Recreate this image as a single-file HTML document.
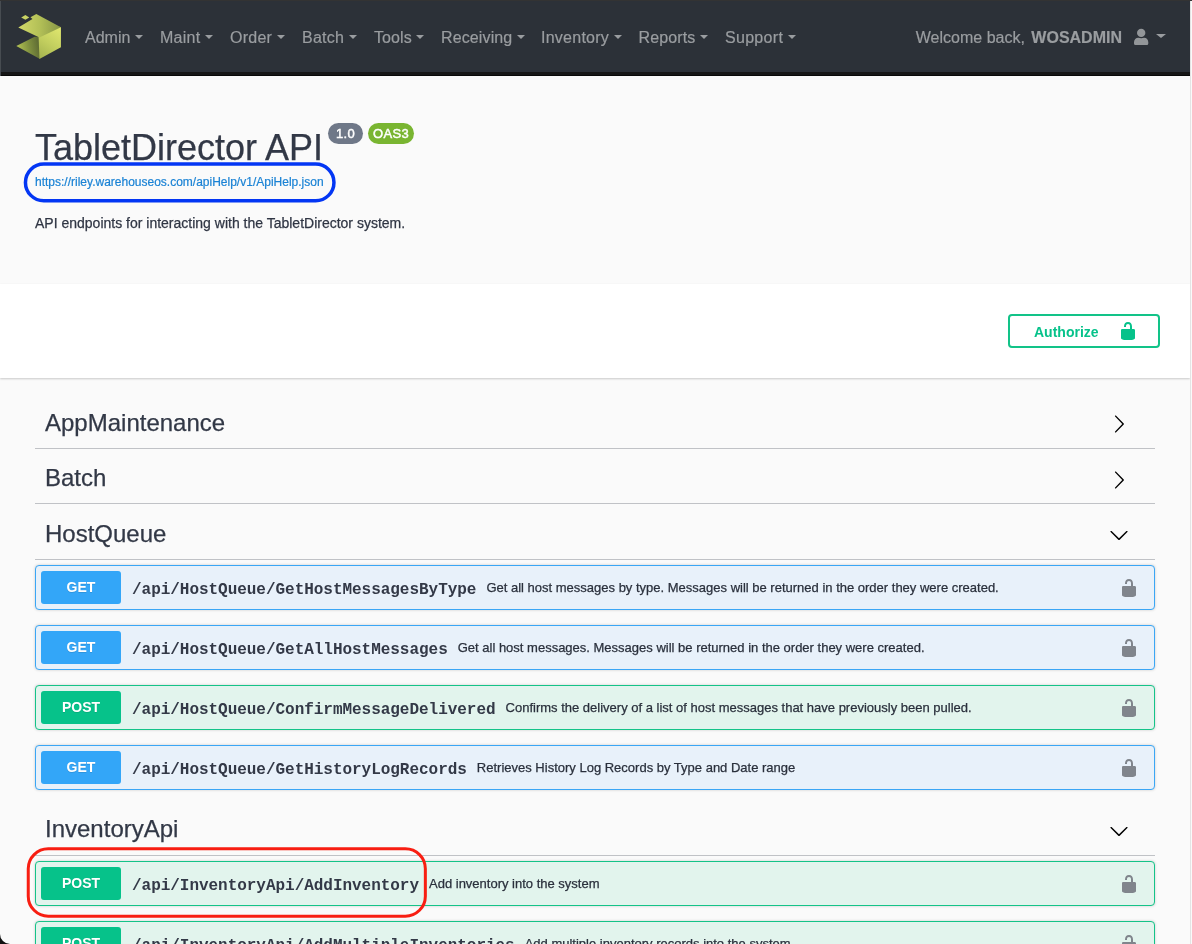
<!DOCTYPE html>
<html><head><meta charset="utf-8">
<style>
*{box-sizing:border-box;margin:0;padding:0}
html,body{width:1192px;height:944px;overflow:hidden;background:#fafafa;font-family:"Liberation Sans",sans-serif;color:#3b4151}
.title,.desc,.tag span{-webkit-text-stroke:0.25px currentColor}
.op .p i{-webkit-text-stroke:0.25px currentColor}
nav .item,.link{-webkit-text-stroke:0.2px currentColor}
.badge{-webkit-text-stroke:0.45px currentColor;letter-spacing:0.3px}
#edgeL{position:absolute;left:0;top:0;width:1px;height:76px;background:#474c51;z-index:5}
#edgeT{position:absolute;left:0;top:0;width:1192px;height:1px;background:#333;z-index:6}
#edgeR{position:absolute;left:1190px;top:0;width:2px;height:944px;background:#fafafa;z-index:5;border-left:1px solid #e4e4e4}
nav{position:absolute;left:0;top:0;width:1190px;height:72px;background:#2c3138}
nav .bb{position:absolute;left:0;top:72px;width:1190px;height:4px;background:#161616;border-bottom:1px solid #090909}
nav .logo{position:absolute}
nav .item{position:absolute;top:28px;font-size:16px;line-height:20px;color:#9a9da0;white-space:nowrap}
.caret{display:inline-block;width:0;height:0;border-left:4.7px solid transparent;border-right:4.7px solid transparent;border-top:4.7px solid #9a9da0;vertical-align:4.5px;margin-left:4.5px}
.info{position:absolute;left:0;top:76px;width:1190px;height:207px;background:#fafafa}
.title{position:absolute;left:35px;top:126px;font-size:36px;line-height:44px;color:#323846;white-space:nowrap}
.badge{position:absolute;top:123px;height:21px;border-radius:57px;color:#fff;font-size:13px;line-height:21px;text-align:center;font-weight:normal}
.link{position:absolute;left:35px;top:174px;font-size:12px;line-height:16px;color:#1b83d5;white-space:nowrap}
.desc{position:absolute;left:35px;top:214px;font-size:14px;line-height:18px;color:#303644;white-space:nowrap}
.scheme{position:absolute;left:0;top:284px;width:1190px;height:94px;background:#fff;box-shadow:0 1px 2px 0 rgba(0,0,0,.2)}
.auth{position:absolute;left:1008px;top:314px;width:152px;height:34px;border:2px solid #12c388;border-radius:4px;color:#06c28a;font-weight:bold;font-size:14px;line-height:32px;padding-left:24px;background:#fff}
.tag{position:absolute;left:35px;width:1120px;height:55px;border-bottom:1px solid rgba(59,65,81,.3);font-size:24px;color:#323846}
.tag span{position:absolute;left:10px;top:15px;line-height:28px;white-space:nowrap}
.tag svg{position:absolute;left:1074px;top:20px}
.op{position:absolute;left:35px;width:1120px;height:45px;border:1px solid #3aa6f5;background:#e8f1fa;border-radius:4px;box-shadow:0 0 3px rgba(0,0,0,.19)}
.op.post{border-color:#14c388;background:#e2f4ed}
.op .m{position:absolute;left:5px;top:5px;width:80px;height:33px;border-radius:3px;background:#33a6f8;color:#fff;font-weight:bold;font-size:14px;line-height:33px;text-align:center;text-shadow:0 1px 0 rgba(0,0,0,.1)}
.op.post .m{background:#06c28a}
.op .p{position:absolute;left:96px;top:11.5px;font-family:"Liberation Mono",monospace;font-weight:bold;font-size:16px;line-height:20px;color:#333947;white-space:nowrap;letter-spacing:-0.035px}
.op .p i{letter-spacing:0;font-style:normal;font-family:"Liberation Sans",sans-serif;font-weight:normal;font-size:13px;margin-left:10px;vertical-align:2px;color:#2a303c}
.op .lk{position:absolute;left:1083px;top:12px}
</style></head><body>
<div id="wrap" style="position:absolute;left:0;top:0;width:1192px;height:944px;will-change:transform">
<div id="edgeT"></div><div id="edgeL"></div><div id="edgeR"></div>
<nav>
  <svg class="logo" viewBox="0 0 944 944" width="54" height="54" style="left:12px;top:10px">
<defs>
<linearGradient id="gTop" x1="110" y1="0" x2="855" y2="0" gradientUnits="userSpaceOnUse"><stop offset="0" stop-color="#d2d969"/><stop offset=".5" stop-color="#b3c057"/><stop offset="1" stop-color="#879645"/></linearGradient>
<linearGradient id="gRight" x1="480" y1="855" x2="855" y2="330" gradientUnits="userSpaceOnUse"><stop offset="0" stop-color="#a3b24e"/><stop offset=".5" stop-color="#c3cf5f"/><stop offset="1" stop-color="#dfe66e"/></linearGradient>
<linearGradient id="gBot" x1="75" y1="630" x2="470" y2="560" gradientUnits="userSpaceOnUse"><stop offset="0" stop-color="#b6c554"/><stop offset=".55" stop-color="#7f8f3f"/><stop offset="1" stop-color="#5d6a33"/></linearGradient>
</defs>
<path fill="#c9d263" d="M161 129 L234 87 L302 129 L234 170 Z"/>
<path fill="url(#gBot)" d="M75 630 L395 468 L490 470 L490 855 Z"/>
<path fill="url(#gRight)" d="M465 464 L835 293 L855 300 L855 650 L480 855 Z"/>
<path fill="url(#gTop)" d="M110 306 L358 158 L323 126 L425 70 L855 300 L480 480 Z"/>
</svg>
  <div class="item" style="left:85px">Admin<span class="caret"></span></div>
  <div class="item" style="left:160px;letter-spacing:.26px">Maint<span class="caret"></span></div>
  <div class="item" style="left:230px;letter-spacing:.26px">Order<span class="caret"></span></div>
  <div class="item" style="left:302px;letter-spacing:.25px">Batch<span class="caret"></span></div>
  <div class="item" style="left:374px;letter-spacing:.1px">Tools<span class="caret"></span></div>
  <div class="item" style="left:441px;letter-spacing:.12px">Receiving<span class="caret"></span></div>
  <div class="item" style="left:541px;letter-spacing:.25px">Inventory<span class="caret"></span></div>
  <div class="item" style="left:638.5px;letter-spacing:.12px">Reports<span class="caret"></span></div>
  <div class="item" style="left:725px;letter-spacing:.3px">Support<span class="caret"></span></div>
  <div class="item" style="left:915.8px">Welcome back, <b style="margin-left:2px">WOSADMIN</b></div>
  <svg style="position:absolute;left:1133px;top:28px" width="16" height="18" viewBox="0 0 16 18">
<circle cx="8.2" cy="4.9" r="4.2" fill="#939699"/>
<path fill="#939699" d="M2.5 17.1 Q1 17.1 1 15.6 V14.2 C1 11.6 2.9 9.7 5.3 9.7 C6.3 9.9 7.3 10.2 8.2 10.2 C9.1 10.2 10.1 9.9 11.1 9.7 C13.5 9.7 15.3 11.6 15.3 14.2 V15.6 Q15.3 17.1 13.8 17.1 Z"/>
</svg>
<span class="caret" style="position:absolute;left:1156px;top:34px;margin:0;border-width:4.5px 5px 0 5px"></span>
  <div class="bb"></div>
</nav>
<div class="info"></div>
<div class="title">TabletDirector API</div>
<div class="badge" style="left:328px;width:35px;background:#6f7888">1.0</div>
<div class="badge" style="left:368px;width:46px;background:#79b531">OAS3</div>
<div class="link">https://riley.warehouseos.com/apiHelp/v1/ApiHelp.json</div>
<div class="desc">API endpoints for interacting with the TabletDirector system.</div>
<div class="scheme"></div>
<div class="auth">Authorize</div>
<svg style="position:absolute;left:1118px;top:321px" width="20" height="20" viewBox="0 0 20 20"><path fill="#06c28a" d="M15.8 8H14V5.6C14 2.703 12.665 1 10 1 7.334 1 6 2.703 6 5.6V6h2v-.801C8 3.754 8.797 3 10 3c1.203 0 2 .754 2 2.199V8H4c-.553 0-1 .646-1 1.199V17c0 .549.428 1.139.951 1.307l1.197.387C5.672 18.861 6.55 19 7.1 19h5.8c.549 0 1.428-.139 1.951-.307l1.196-.387c.524-.167.953-.757.953-1.306V9.199C17 8.646 16.352 8 15.8 8z"/></svg>

<div class="tag" style="top:394px"><span>AppMaintenance</span><svg width="20" height="20" viewBox="0 0 20 20"><path fill="#000" d="M13.25 10L6.109 2.58a.697.697 0 0 1 .031-.979.715.715 0 0 1 .99.028l7.615 7.911a.697.697 0 0 1-.002.982l-7.615 7.83a.714.714 0 0 1-.99.028.697.697 0 0 1-.031-.979L13.25 10z"/></svg></div>
<div class="tag" style="top:449px"><span>Batch</span><svg style="top:21px" width="20" height="20" viewBox="0 0 20 20"><path fill="#000" d="M13.25 10L6.109 2.58a.697.697 0 0 1 .031-.979.715.715 0 0 1 .99.028l7.615 7.911a.697.697 0 0 1-.002.982l-7.615 7.83a.714.714 0 0 1-.99.028.697.697 0 0 1-.031-.979L13.25 10z"/></svg></div>
<div class="tag" style="top:505px"><span>HostQueue</span><svg width="20" height="20" viewBox="0 0 20 20"><path fill="#000" d="M17.418 6.109c.272-.268.709-.268.979 0s.271.701 0 .969l-7.908 7.83c-.27.268-.707.268-.979 0l-7.908-7.83c-.27-.268-.27-.701 0-.969.271-.268.709-.268.979 0L10 13.25l7.418-7.141z"/></svg></div>
<div class="op" style="top:565px"><div class="m">GET</div><div class="p">/api/HostQueue/GetHostMessagesByType<i>Get all host messages by type. Messages will be returned in the order they were created.</i></div><svg class="lk" width="20" height="20" viewBox="0 0 20 20"><path fill="#80858c" d="M15.8 8H14V5.6C14 2.703 12.665 1 10 1 7.334 1 6 2.703 6 5.6V6h2v-.801C8 3.754 8.797 3 10 3c1.203 0 2 .754 2 2.199V8H4c-.553 0-1 .646-1 1.199V17c0 .549.428 1.139.951 1.307l1.197.387C5.672 18.861 6.55 19 7.1 19h5.8c.549 0 1.428-.139 1.951-.307l1.196-.387c.524-.167.953-.757.953-1.306V9.199C17 8.646 16.352 8 15.8 8z"/></svg></div>
<div class="op" style="top:625px"><div class="m">GET</div><div class="p">/api/HostQueue/GetAllHostMessages<i>Get all host messages. Messages will be returned in the order they were created.</i></div><svg class="lk" width="20" height="20" viewBox="0 0 20 20"><path fill="#80858c" d="M15.8 8H14V5.6C14 2.703 12.665 1 10 1 7.334 1 6 2.703 6 5.6V6h2v-.801C8 3.754 8.797 3 10 3c1.203 0 2 .754 2 2.199V8H4c-.553 0-1 .646-1 1.199V17c0 .549.428 1.139.951 1.307l1.197.387C5.672 18.861 6.55 19 7.1 19h5.8c.549 0 1.428-.139 1.951-.307l1.196-.387c.524-.167.953-.757.953-1.306V9.199C17 8.646 16.352 8 15.8 8z"/></svg></div>
<div class="op post" style="top:685px"><div class="m">POST</div><div class="p">/api/HostQueue/ConfirmMessageDelivered<i>Confirms the delivery of a list of host messages that have previously been pulled.</i></div><svg class="lk" width="20" height="20" viewBox="0 0 20 20"><path fill="#80858c" d="M15.8 8H14V5.6C14 2.703 12.665 1 10 1 7.334 1 6 2.703 6 5.6V6h2v-.801C8 3.754 8.797 3 10 3c1.203 0 2 .754 2 2.199V8H4c-.553 0-1 .646-1 1.199V17c0 .549.428 1.139.951 1.307l1.197.387C5.672 18.861 6.55 19 7.1 19h5.8c.549 0 1.428-.139 1.951-.307l1.196-.387c.524-.167.953-.757.953-1.306V9.199C17 8.646 16.352 8 15.8 8z"/></svg></div>
<div class="op" style="top:745px"><div class="m">GET</div><div class="p">/api/HostQueue/GetHistoryLogRecords<i>Retrieves History Log Records by Type and Date range</i></div><svg class="lk" width="20" height="20" viewBox="0 0 20 20"><path fill="#80858c" d="M15.8 8H14V5.6C14 2.703 12.665 1 10 1 7.334 1 6 2.703 6 5.6V6h2v-.801C8 3.754 8.797 3 10 3c1.203 0 2 .754 2 2.199V8H4c-.553 0-1 .646-1 1.199V17c0 .549.428 1.139.951 1.307l1.197.387C5.672 18.861 6.55 19 7.1 19h5.8c.549 0 1.428-.139 1.951-.307l1.196-.387c.524-.167.953-.757.953-1.306V9.199C17 8.646 16.352 8 15.8 8z"/></svg></div>
<div class="tag" style="top:801px"><span style="top:14px">InventoryApi</span><svg style="top:20px" width="20" height="20" viewBox="0 0 20 20"><path fill="#000" d="M17.418 6.109c.272-.268.709-.268.979 0s.271.701 0 .969l-7.908 7.83c-.27.268-.707.268-.979 0l-7.908-7.83c-.27-.268-.27-.701 0-.969.271-.268.709-.268.979 0L10 13.25l7.418-7.141z"/></svg></div>
<div class="op post" style="top:861px"><div class="m">POST</div><div class="p">/api/InventoryApi/AddInventory<i>Add inventory into the system</i></div><svg class="lk" width="20" height="20" viewBox="0 0 20 20"><path fill="#80858c" d="M15.8 8H14V5.6C14 2.703 12.665 1 10 1 7.334 1 6 2.703 6 5.6V6h2v-.801C8 3.754 8.797 3 10 3c1.203 0 2 .754 2 2.199V8H4c-.553 0-1 .646-1 1.199V17c0 .549.428 1.139.951 1.307l1.197.387C5.672 18.861 6.55 19 7.1 19h5.8c.549 0 1.428-.139 1.951-.307l1.196-.387c.524-.167.953-.757.953-1.306V9.199C17 8.646 16.352 8 15.8 8z"/></svg></div>
<div class="op post" style="top:921px"><div class="m">POST</div><div class="p">/api/InventoryApi/AddMultipleInventories<i>Add multiple inventory records into the system.</i></div><svg class="lk" width="20" height="20" viewBox="0 0 20 20"><path fill="#80858c" d="M15.8 8H14V5.6C14 2.703 12.665 1 10 1 7.334 1 6 2.703 6 5.6V6h2v-.801C8 3.754 8.797 3 10 3c1.203 0 2 .754 2 2.199V8H4c-.553 0-1 .646-1 1.199V17c0 .549.428 1.139.951 1.307l1.197.387C5.672 18.861 6.55 19 7.1 19h5.8c.549 0 1.428-.139 1.951-.307l1.196-.387c.524-.167.953-.757.953-1.306V9.199C17 8.646 16.352 8 15.8 8z"/></svg></div>
<svg style="position:absolute;left:0;top:0;z-index:10" width="1192" height="944">
<rect x="25.45" y="164.05" width="308.5" height="36.7" rx="18.35" ry="18.35" fill="none" stroke="#0336f4" stroke-width="3.5"/>
<rect x="28.25" y="848.75" width="397.1" height="67.4" rx="20" ry="20" fill="none" stroke="#f81e12" stroke-width="3"/>
<path d="M0 934 A10 10 0 0 0 10 944 L0 944 Z" fill="#111"/>
</svg>
</div>
</body></html>
